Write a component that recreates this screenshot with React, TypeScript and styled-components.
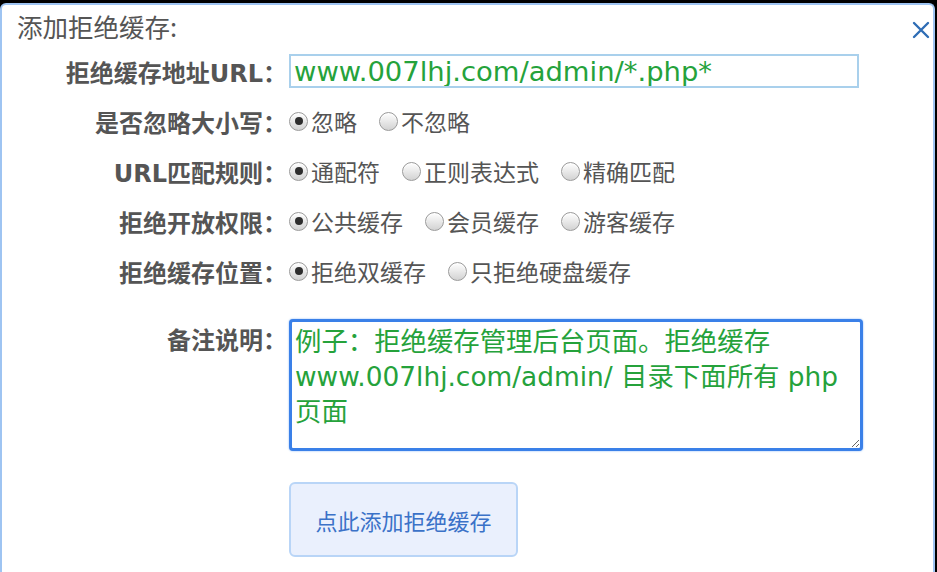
import React from "react";
import styled, { createGlobalStyle } from "styled-components";

const Global = createGlobalStyle`
  html, body { margin: 0; padding: 0; background: #000; }
  body { width: 937px; height: 572px; overflow: hidden; font-family: "Noto Sans CJK SC", sans-serif; }
  * { box-sizing: border-box; }
`;

const Dialog = styled.div`
  margin-top: 3px;
  width: 935px;
  height: 569px;
  background: #fff;
  border: 2px solid #9ec4f2;
  border-bottom: none;
  border-radius: 6px 6px 0 0;
  position: relative;
  display: flex;
  flex-direction: column;
`;

const Title = styled.div`
  height: 41px;
  padding-left: 15px;
  display: flex;
  align-items: center;
  font-size: 25.5px;
  color: #555;
  font-family: "Noto Sans CJK SC", sans-serif;
`;

const Close = styled.button`
  position: absolute;
  top: 16px;
  right: 3px;
  width: 18px;
  height: 18px;
  padding: 0;
  border: none;
  background: transparent;
  display: flex;
  align-items: center;
  justify-content: center;
`;

const Form = styled.div`
  display: grid;
  grid-template-columns: 287px 1fr;
  grid-auto-rows: 50px;
`;

const Label = styled.div<{ $top?: boolean }>`
  display: flex;
  justify-content: flex-end;
  align-items: ${(p) => (p.$top ? "flex-start" : "center")};
  padding-top: ${(p) => (p.$top ? "2px" : "0")};
  padding-right: 2px;
  font-family: "DejaVu Sans", "Noto Sans CJK SC", sans-serif;
  font-size: 24px;
  font-weight: bold;
  color: #555;
  white-space: nowrap;
`;

const Field = styled.div`
  display: flex;
  align-items: center;
`;

const TextInput = styled.input`
  width: 570px;
  height: 34px;
  border: 2px solid #a9d0ec;
  padding: 0 3px;
  font-family: "DejaVu Sans", sans-serif;
  font-size: 27.4px;
  color: #25a23b;
  outline: none;
  background: #fff;
`;

const Options = styled.div`
  display: flex;
  align-items: center;
  gap: 22px;
`;

const Option = styled.label`
  display: flex;
  align-items: center;
  gap: 3px;
  font-size: 23px;
  color: #555;
  white-space: nowrap;
`;

const RadioDot = styled.span<{ $on?: boolean }>`
  width: 19px;
  height: 19px;
  border-radius: 50%;
  border: 1px solid #9a9a9a;
  background: linear-gradient(#ffffff, #d2d2d2);
  box-shadow: inset 0 1px 1px rgba(255, 255, 255, 0.9);
  display: flex;
  align-items: center;
  justify-content: center;
  &::after {
    content: "";
    display: ${(p) => (p.$on ? "block" : "none")};
    width: 8px;
    height: 8px;
    border-radius: 50%;
    background: #2e2e2e;
  }
`;

const NoteRow = styled.div`
  display: grid;
  grid-template-columns: 287px 1fr;
  margin-top: 23px;
`;

const Note = styled.textarea`
  display: block;
  width: 574px;
  height: 132px;
  border: 3px solid #3a80e8;
  border-radius: 4px;
  box-shadow: 0 0 2px #7fb0f5;
  padding: 2px 3px;
  font-family: "DejaVu Sans", "Noto Sans CJK SC", sans-serif;
  font-size: 26.4px;
  line-height: 35px;
  color: #25a23b;
  outline: none;
  resize: both;
  overflow: hidden;
`;

const ButtonRow = styled.div`
  display: grid;
  grid-template-columns: 287px 1fr;
  margin-top: 31px;
`;

const Submit = styled.button`
  display: block;
  width: 229px;
  height: 75px;
  background: #eaf0fd;
  border: 2px solid #b9d5f7;
  border-radius: 6px;
  color: #3b72c8;
  font-family: "Noto Sans CJK SC", sans-serif;
  font-size: 22px;
  padding: 0;
`;

const groups: { label: string; opts: string[] }[] = [
  { label: "是否忽略大小写：", opts: ["忽略", "不忽略"] },
  { label: "URL匹配规则：", opts: ["通配符", "正则表达式", "精确匹配"] },
  { label: "拒绝开放权限：", opts: ["公共缓存", "会员缓存", "游客缓存"] },
  { label: "拒绝缓存位置：", opts: ["拒绝双缓存", "只拒绝硬盘缓存"] },
];

export default function App() {
  return (
    <>
      <Global />
      <Dialog>
        <Title>添加拒绝缓存:</Title>
        <Close aria-label="close">
          <svg width="18" height="18" viewBox="0 0 18 18">
            <path d="M2 2 L16 16 M16 2 L2 16" stroke="#2f6db5" strokeWidth="2.4" strokeLinecap="round" />
          </svg>
        </Close>
        <Form>
          <Label>拒绝缓存地址URL：</Label>
          <Field>
            <TextInput defaultValue="www.007lhj.com/admin/*.php*" />
          </Field>
          {groups.map((g) => (
            <React.Fragment key={g.label}>
              <Label>{g.label}</Label>
              <Field>
                <Options>
                  {g.opts.map((o, i) => (
                    <Option key={o}>
                      <RadioDot $on={i === 0} />
                      {o}
                    </Option>
                  ))}
                </Options>
              </Field>
            </React.Fragment>
          ))}
        </Form>
        <NoteRow>
          <Label $top>备注说明：</Label>
          <div>
            <Note defaultValue={"例子：拒绝缓存管理后台页面。拒绝缓存 www.007lhj.com/admin/ 目录下面所有 php 页面"} />
          </div>
        </NoteRow>
        <ButtonRow>
          <div />
          <div>
            <Submit>点此添加拒绝缓存</Submit>
          </div>
        </ButtonRow>
      </Dialog>
    </>
  );
}
